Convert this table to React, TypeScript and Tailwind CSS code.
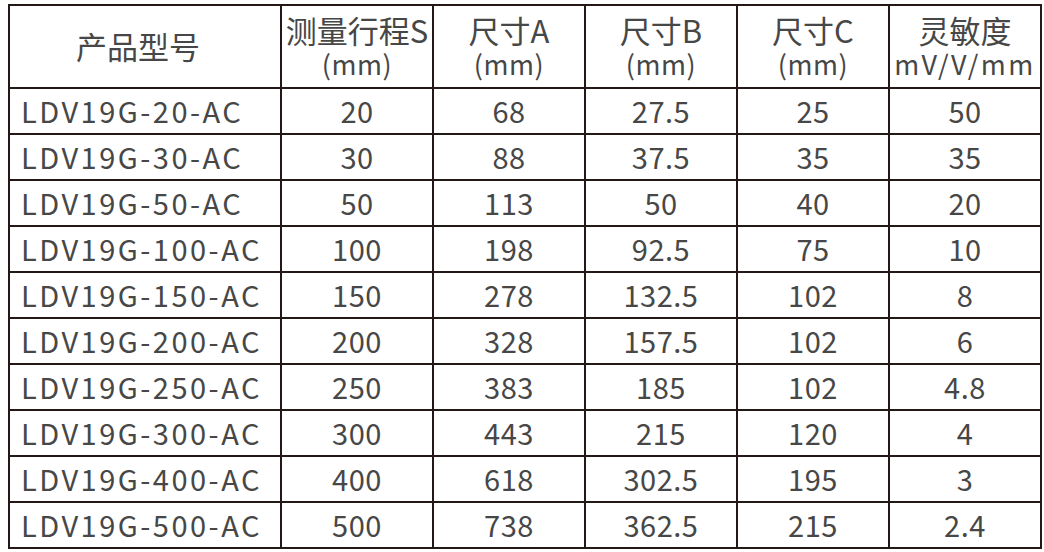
const rows = [
  ["LDV19G-20-AC", "20", "68", "27.5", "25", "50"],
  ["LDV19G-30-AC", "30", "88", "37.5", "35", "35"],
  ["LDV19G-50-AC", "50", "113", "50", "40", "20"],
  ["LDV19G-100-AC", "100", "198", "92.5", "75", "10"],
  ["LDV19G-150-AC", "150", "278", "132.5", "102", "8"],
  ["LDV19G-200-AC", "200", "328", "157.5", "102", "6"],
  ["LDV19G-250-AC", "250", "383", "185", "102", "4.8"],
  ["LDV19G-300-AC", "300", "443", "215", "120", "4"],
  ["LDV19G-400-AC", "400", "618", "302.5", "195", "3"],
  ["LDV19G-500-AC", "500", "738", "362.5", "215", "2.4"],
];

const headers = [
  ["测量行程S", "(mm)"],
  ["尺寸A", "(mm)"],
  ["尺寸B", "(mm)"],
  ["尺寸C", "(mm)"],
  ["灵敏度", "mV/V/mm"],
];

const cell = "border-r-2 border-b-2 border-[#231815] flex items-center";

export default function App() {
  return (
    <div className="w-[1044px] h-[552px] bg-white pl-[8px] pt-[4px] text-[#474747] font-['Noto_Sans_CJK_SC','Noto_Sans',sans-serif]">
      <div className="grid grid-cols-[272px_repeat(5,152px)] border-l-2 border-t-2 border-[#231815] w-fit">
        <div className={`${cell} h-[83px] justify-center text-[31px] pr-[14px]`}>产品型号</div>
        {headers.map(([a, b]) => (
          <div key={a} className={`${cell} h-[83px] flex-col justify-center`}>
            <span className="text-[31px] leading-[34px] whitespace-nowrap">{a}</span>
            <span className={`text-[27px] leading-[34px] ${b === "mV/V/mm" ? "tracking-[2.5px]" : "tracking-[0.5px]"}`}>{b}</span>
          </div>
        ))}
        {rows.map((r) =>
          r.map((v, i) => (
            <div
              key={r[0] + i}
              className={`${cell} h-[46px] text-[29px] ${i === 0 ? "pl-[11px] tracking-[2.5px]" : "justify-center tracking-[0.5px]"}`}
            >
              {v}
            </div>
          ))
        )}
      </div>
    </div>
  );
}
